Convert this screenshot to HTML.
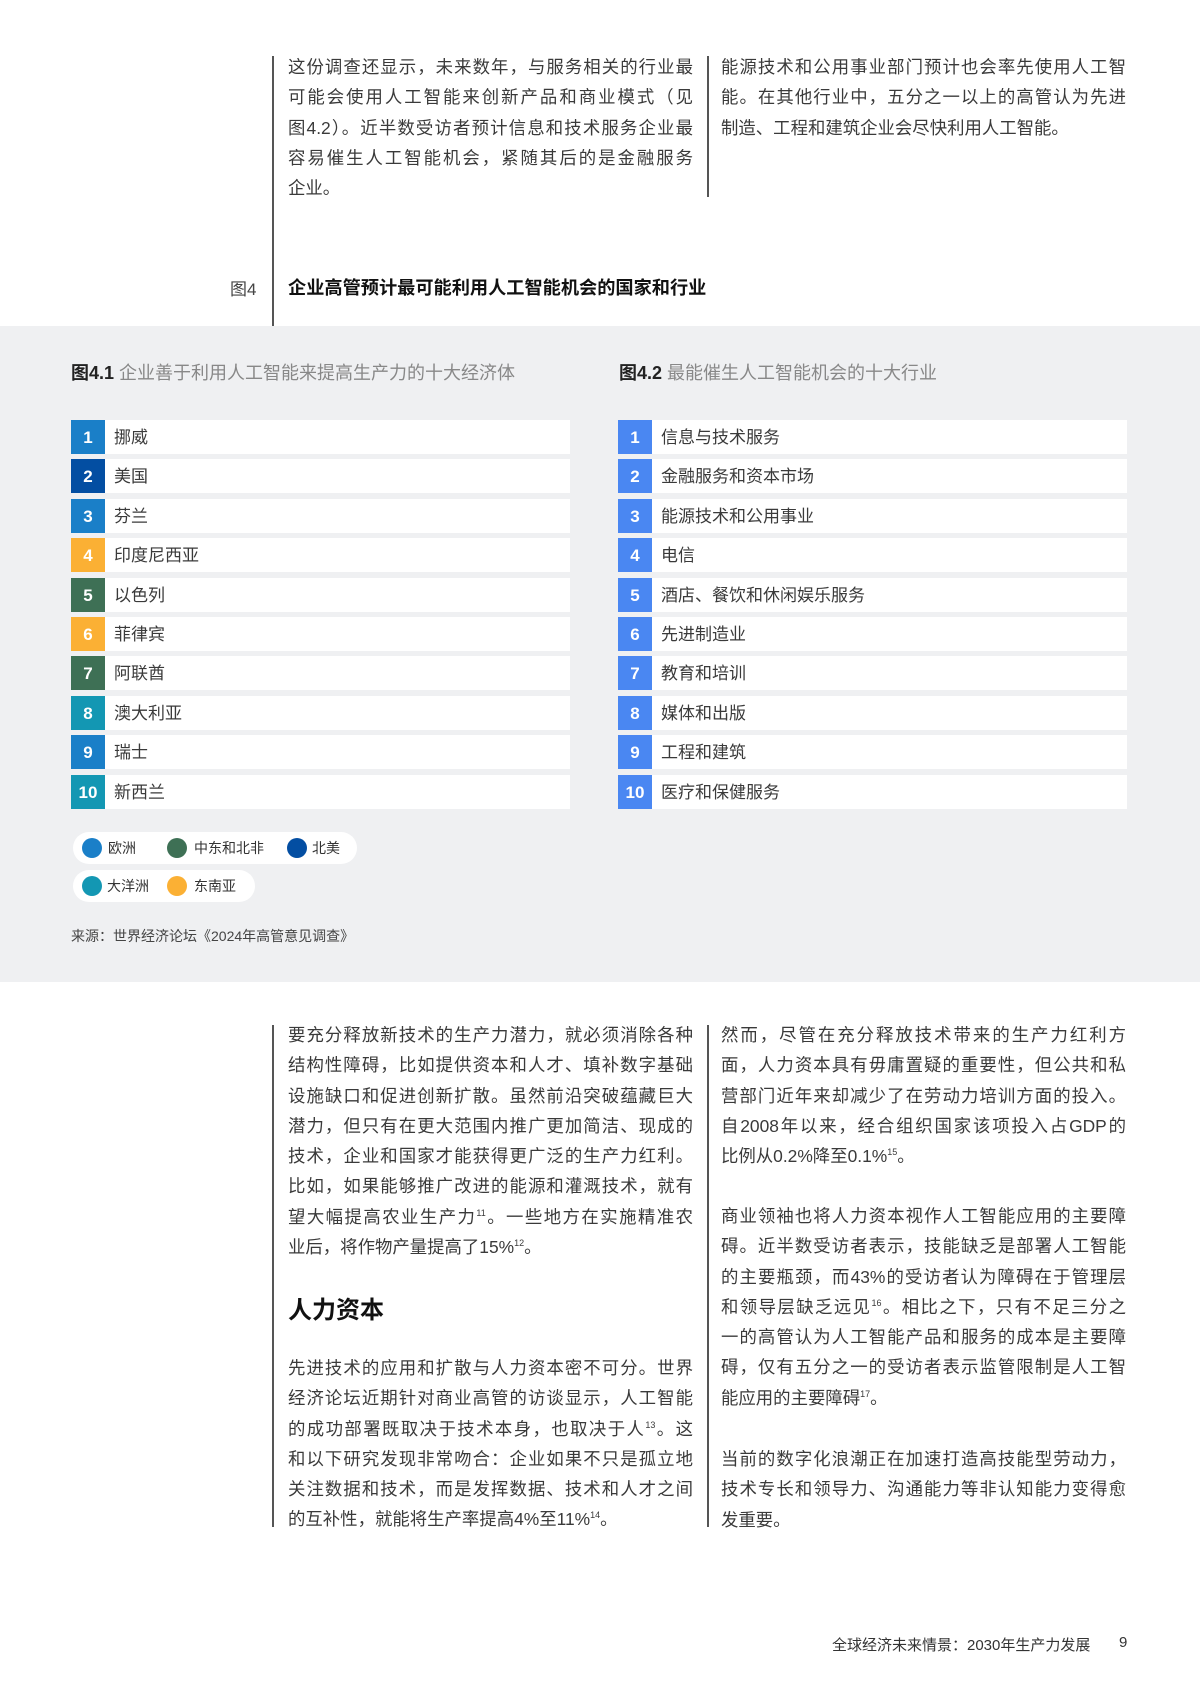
<!DOCTYPE html>
<html><head><meta charset="utf-8"><style>
*{margin:0;padding:0;box-sizing:border-box}
body{width:1200px;height:1698px;background:#fff;position:relative;overflow:hidden;font-family:"Liberation Sans","Noto Sans CJK SC",sans-serif;color:#3a3a3a}
.a{position:absolute}
.vl{position:absolute;width:2px;background:#555}
.p{position:absolute;font-size:17.4px;line-height:30.3px;width:405px}
.p div{text-align:justify;text-align-last:justify;white-space:nowrap;height:30.3px}
.p div.l{text-align-last:left}
.grey{position:absolute;left:0;top:326px;width:1200px;height:656px;background:#eff0f2}
.row{position:absolute;height:34px;background:#fff;font-size:17px;line-height:36px}
.num{position:absolute;left:0;top:0;width:34px;height:34px;color:#fff;font-weight:bold;text-align:center;font-size:17px;line-height:36px}
.row span.t{position:absolute;left:43px;top:0}
.pill{position:absolute;background:#fff;border-radius:16px}
.dot{position:absolute;width:20px;height:20px;border-radius:50%}
.lg{position:absolute;font-size:14px;line-height:20px;color:#333}
sup{font-size:9px;vertical-align:7px;line-height:0}
</style></head><body>
<div class="vl" style="left:272px;top:56px;height:270px"></div>
<div class="vl" style="left:707px;top:56px;height:141px"></div>
<div class="p" style="left:288px;top:52px">
<div>这份调查还显示，未来数年，与服务相关的行业最</div>
<div>可能会使用人工智能来创新产品和商业模式（见</div>
<div>图4.2）。近半数受访者预计信息和技术服务企业最</div>
<div>容易催生人工智能机会，紧随其后的是金融服务</div>
<div class="l">企业。</div>
</div>
<div class="p" style="left:721px;top:52px">
<div>能源技术和公用事业部门预计也会率先使用人工智</div>
<div>能。在其他行业中，五分之一以上的高管认为先进</div>
<div class="l">制造、工程和建筑企业会尽快利用人工智能。</div>
</div>
<div class="a" style="left:230px;top:275px;font-size:17px;color:#444">图4</div>
<div class="a" style="left:288px;top:274px;font-size:18.2px;font-weight:bold;color:#111">企业高管预计最可能利用人工智能机会的国家和行业</div>

<div class="grey"></div>
<div class="a" style="left:71px;top:359px;font-size:18px;color:#888"><b style="color:#222">图4.1</b> 企业善于利用人工智能来提高生产力的十大经济体</div>
<div class="a" style="left:619px;top:359px;font-size:18px;color:#888"><b style="color:#222">图4.2</b> 最能催生人工智能机会的十大行业</div>

<div class="row" style="left:71px;top:420px;width:499px"><div class="num" style="background:#1a7fc8">1</div><span class="t">挪威</span></div>
<div class="row" style="left:71px;top:459px;width:499px"><div class="num" style="background:#034ea2">2</div><span class="t">美国</span></div>
<div class="row" style="left:71px;top:499px;width:499px"><div class="num" style="background:#1a7fc8">3</div><span class="t">芬兰</span></div>
<div class="row" style="left:71px;top:538px;width:499px"><div class="num" style="background:#fbb034">4</div><span class="t">印度尼西亚</span></div>
<div class="row" style="left:71px;top:578px;width:499px"><div class="num" style="background:#3e7055">5</div><span class="t">以色列</span></div>
<div class="row" style="left:71px;top:617px;width:499px"><div class="num" style="background:#fbb034">6</div><span class="t">菲律宾</span></div>
<div class="row" style="left:71px;top:656px;width:499px"><div class="num" style="background:#3e7055">7</div><span class="t">阿联酋</span></div>
<div class="row" style="left:71px;top:696px;width:499px"><div class="num" style="background:#1397b3">8</div><span class="t">澳大利亚</span></div>
<div class="row" style="left:71px;top:735px;width:499px"><div class="num" style="background:#1a7fc8">9</div><span class="t">瑞士</span></div>
<div class="row" style="left:71px;top:775px;width:499px"><div class="num" style="background:#1397b3">10</div><span class="t">新西兰</span></div>

<div class="row" style="left:618px;top:420px;width:509px"><div class="num" style="background:#4a87f2">1</div><span class="t">信息与技术服务</span></div>
<div class="row" style="left:618px;top:459px;width:509px"><div class="num" style="background:#4a87f2">2</div><span class="t">金融服务和资本市场</span></div>
<div class="row" style="left:618px;top:499px;width:509px"><div class="num" style="background:#4a87f2">3</div><span class="t">能源技术和公用事业</span></div>
<div class="row" style="left:618px;top:538px;width:509px"><div class="num" style="background:#4a87f2">4</div><span class="t">电信</span></div>
<div class="row" style="left:618px;top:578px;width:509px"><div class="num" style="background:#4a87f2">5</div><span class="t">酒店、餐饮和休闲娱乐服务</span></div>
<div class="row" style="left:618px;top:617px;width:509px"><div class="num" style="background:#4a87f2">6</div><span class="t">先进制造业</span></div>
<div class="row" style="left:618px;top:656px;width:509px"><div class="num" style="background:#4a87f2">7</div><span class="t">教育和培训</span></div>
<div class="row" style="left:618px;top:696px;width:509px"><div class="num" style="background:#4a87f2">8</div><span class="t">媒体和出版</span></div>
<div class="row" style="left:618px;top:735px;width:509px"><div class="num" style="background:#4a87f2">9</div><span class="t">工程和建筑</span></div>
<div class="row" style="left:618px;top:775px;width:509px"><div class="num" style="background:#4a87f2">10</div><span class="t">医疗和保健服务</span></div>

<div class="pill" style="left:73px;top:832px;width:284px;height:32px"></div>
<div class="pill" style="left:73px;top:870px;width:182px;height:32px"></div>
<div class="dot" style="left:82px;top:838px;background:#1a7fc8"></div><div class="lg" style="left:108px;top:838px">欧洲</div>
<div class="dot" style="left:167px;top:838px;background:#3e7055"></div><div class="lg" style="left:194px;top:838px">中东和北非</div>
<div class="dot" style="left:287px;top:838px;background:#034ea2"></div><div class="lg" style="left:312px;top:838px">北美</div>
<div class="dot" style="left:82px;top:876px;background:#1397b3"></div><div class="lg" style="left:107px;top:876px">大洋洲</div>
<div class="dot" style="left:167px;top:876px;background:#fbb034"></div><div class="lg" style="left:194px;top:876px">东南亚</div>
<div class="a" style="left:71px;top:926px;font-size:14px;color:#444">来源：世界经济论坛《2024年高管意见调查》</div>

<div class="vl" style="left:272px;top:1025px;height:502px"></div>
<div class="vl" style="left:707px;top:1025px;height:502px"></div>
<div class="p" style="left:288px;top:1020px">
<div>要充分释放新技术的生产力潜力，就必须消除各种</div>
<div>结构性障碍，比如提供资本和人才、填补数字基础</div>
<div>设施缺口和促进创新扩散。虽然前沿突破蕴藏巨大</div>
<div>潜力，但只有在更大范围内推广更加简洁、现成的</div>
<div>技术，企业和国家才能获得更广泛的生产力红利。</div>
<div>比如，如果能够推广改进的能源和灌溉技术，就有</div>
<div>望大幅提高农业生产力<sup>11</sup>。一些地方在实施精准农</div>
<div class="l">业后，将作物产量提高了15%<sup>12</sup>。</div>
</div>
<div class="a" style="left:288px;top:1290px;font-size:24px;font-weight:bold;color:#111">人力资本</div>
<div class="p" style="left:288px;top:1353px">
<div>先进技术的应用和扩散与人力资本密不可分。世界</div>
<div>经济论坛近期针对商业高管的访谈显示，人工智能</div>
<div>的成功部署既取决于技术本身，也取决于人<sup>13</sup>。这</div>
<div>和以下研究发现非常吻合：企业如果不只是孤立地</div>
<div>关注数据和技术，而是发挥数据、技术和人才之间</div>
<div class="l">的互补性，就能将生产率提高4%至11%<sup>14</sup>。</div>
</div>
<div class="p" style="left:721px;top:1020px">
<div>然而，尽管在充分释放技术带来的生产力红利方</div>
<div>面，人力资本具有毋庸置疑的重要性，但公共和私</div>
<div>营部门近年来却减少了在劳动力培训方面的投入。</div>
<div>自2008年以来，经合组织国家该项投入占GDP的</div>
<div class="l">比例从0.2%降至0.1%<sup>15</sup>。</div>
</div>
<div class="p" style="left:721px;top:1201px">
<div>商业领袖也将人力资本视作人工智能应用的主要障</div>
<div>碍。近半数受访者表示，技能缺乏是部署人工智能</div>
<div>的主要瓶颈，而43%的受访者认为障碍在于管理层</div>
<div>和领导层缺乏远见<sup>16</sup>。相比之下，只有不足三分之</div>
<div>一的高管认为人工智能产品和服务的成本是主要障</div>
<div>碍，仅有五分之一的受访者表示监管限制是人工智</div>
<div class="l">能应用的主要障碍<sup>17</sup>。</div>
</div>
<div class="p" style="left:721px;top:1444px">
<div>当前的数字化浪潮正在加速打造高技能型劳动力，</div>
<div>技术专长和领导力、沟通能力等非认知能力变得愈</div>
<div class="l">发重要。</div>
</div>

<div class="a" style="left:832px;top:1634px;font-size:15px;color:#333">全球经济未来情景：2030年生产力发展</div>
<div class="a" style="left:1119px;top:1634px;font-size:15px;color:#333">9</div>
</body></html>
